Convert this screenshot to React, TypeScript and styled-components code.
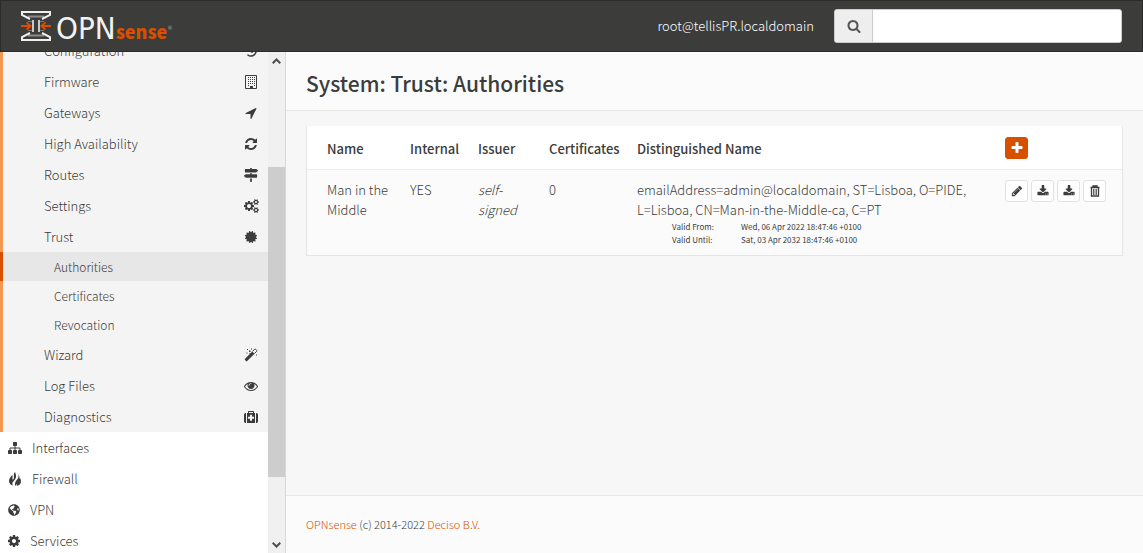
import React from "react";
import styled, { createGlobalStyle, css } from "styled-components";
import { FaCertificate, FaMapSigns, FaGlobeAmericas, FaHistory } from "react-icons/fa";

const orange = "#d94f00";
const ink = "#3c3c3b";

const GlobalStyle = createGlobalStyle`
  *, *::before, *::after { box-sizing: border-box; }
  body {
    margin: 0;
    background: #f7f7f7;
    color: ${ink};
    font-family: "Noto Sans CJK SC", "Noto Sans", sans-serif;
    font-size: 13px;
    font-weight: 300;
    line-height: 20px;
  }
  a { color: ${orange}; text-decoration: none; }
`;

const paths = {
  search:
    "M1216 832q0-185-131.5-316.5t-316.5-131.5-316.5 131.5-131.5 316.5 131.5 316.5 316.5 131.5 316.5-131.5 131.5-316.5zm512 832q0 52-38 90t-90 38q-54 0-90-38l-343-342q-179 124-399 124-143 0-273.5-55.5t-225-150-150-225-55.5-273.5 55.5-273.5 150-225 225-150 273.5-55.5 273.5 55.5 225 150 150 225 55.5 273.5q0 220-124 399l343 343q37 37 37 90z",
  plus:
    "M1600 736v192q0 40-28 68t-68 28h-416v416q0 40-28 68t-68 28h-192q-40 0-68-28t-28-68v-416h-416q-40 0-68-28t-28-68v-192q0-40 28-68t68-28h416v-416q0-40 28-68t68-28h192q40 0 68 28t28 68v416h416q40 0 68 28t28 68z",
  cog:
    "M1152 896q0-106-75-181t-181-75-181 75-75 181 75 181 181 75 181-75 75-181zm512-109v222q0 12-8 23t-20 13l-185 28q-19 54-39 91 35 50 107 138 10 12 10 25t-9 23q-27 37-99 108t-94 71q-12 0-26-9l-138-108q-44 23-91 38-16 136-29 186-7 28-36 28h-222q-14 0-24.5-8.5t-11.5-21.5l-28-184q-49-16-90-37l-141 107q-10 9-25 9-14 0-25-11-126-114-165-168-7-10-7-23 0-12 8-23 15-21 51-66.5t54-70.5q-27-50-41-99l-183-27q-13-2-21-12.5t-8-23.5v-222q0-12 8-23t19-13l186-28q14-46 39-92-40-57-107-138-10-12-10-24 0-10 9-23 26-36 98.5-107.5t94.5-71.5q13 0 26 10l138 107q44-23 91-38 16-136 29-186 7-28 36-28h222q14 0 24.5 8.5t11.5 21.5l28 184q49 16 90 37l142-107q9-9 24-9 13 0 25 10 129 119 165 170 7 8 7 22 0 12-8 23-15 21-51 66.5t-54 70.5q26 50 41 98l183 28q13 2 21 12.5t8 23.5z",
  cogs:
    "M896 896q0-106-75-181t-181-75-181 75-75 181 75 181 181 75 181-75 75-181zm768 512q0-52-38-90t-90-38-90 38-38 90q0 53 37.5 90.5t90.5 37.5 90.5-37.5 37.5-90.5zm0-1024q0-52-38-90t-90-38-90 38-38 90q0 53 37.5 90.5t90.5 37.5 90.5-37.5 37.5-90.5zm-384 421v185q0 10-7 19.5t-16 10.5l-155 24q-11 35-32 76 34 48 90 115 7 11 7 20 0 12-7 19-23 30-82.5 89.5t-78.5 59.5q-11 0-21-7l-115-90q-37 19-77 31-11 108-23 155-7 24-30 24h-186q-11 0-20-7.5t-10-17.5l-23-153q-34-10-75-31l-118 89q-7 7-20 7-11 0-21-8-144-133-144-160 0-9 7-19 10-14 41-53t47-61q-23-44-35-82l-152-24q-10-1-17-9.5t-7-19.5v-185q0-10 7-19.5t16-10.5l155-24q11-35 32-76-34-48-90-115-7-11-7-20 0-12 7-20 22-30 82-89t79-59q11 0 21 7l115 90q34-18 77-32 11-108 23-154 7-24 30-24h186q11 0 20 7.5t10 17.5l23 153q34 10 75 31l118-89q8-7 20-7 11 0 21 8 144 133 144 160 0 8-7 19-12 16-42 54t-45 60q23 48 34 82l152 23q10 2 17 10.5t7 19.5zm640 533v140q0 16-149 31-12 27-30 52 51 113 51 138 0 4-4 7-122 71-124 71-8 0-46-47t-52-68q-20 2-30 2t-30-2q-14 21-52 68t-46 47q-2 0-124-71-4-3-4-7 0-25 51-138-18-25-30-52-149-15-149-31v-140q0-16 149-31 13-29 30-52-51-113-51-138 0-4 4-7 4-2 35-20t59-34 30-16q8 0 46 46.5t52 67.5q20-2 30-2t30 2q51-71 92-112l6-2q4 0 124 70 4 3 4 7 0 25-51 138 17 23 30 52 149 15 149 31zm0-1024v140q0 16-149 31-12 27-30 52 51 113 51 138 0 4-4 7-122 71-124 71-8 0-46-47t-52-68q-20 2-30 2t-30-2q-14 21-52 68t-46 47q-2 0-124-71-4-3-4-7 0-25 51-138-18-25-30-52-149-15-149-31v-140q0-16 149-31 13-29 30-52-51-113-51-138 0-4 4-7 4-2 35-20t59-34 30-16q8 0 46 46.5t52 67.5q20-2 30-2t30 2q51-71 92-112l6-2q4 0 124 70 4 3 4 7 0 25-51 138 17 23 30 52 149 15 149 31z",
  refresh:
    "M1639 1056q0 5-1 7-64 268-268 434.5t-478 166.5q-146 0-282.5-55t-243.5-157l-129 129q-19 19-45 19t-45-19-19-45v-448q0-26 19-45t45-19h448q26 0 45 19t19 45-19 45l-137 137q71 66 161 102t187 36q134 0 250-65t186-179q11-17 53-117 8-23 30-23h192q13 0 22.5 9.5t9.5 22.5zm25-800v448q0 26-19 45t-45 19h-448q-26 0-45-19t-19-45 19-45l138-138q-148-137-349-137-134 0-250 65t-186 179q-11 17-53 117-8 23-30 23h-199q-13 0-22.5-9.5t-9.5-22.5v-7q65-268 270-434.5t480-166.5q146 0 284 55.5t245 156.5l130-129q19-19 45-19t45 19 19 45z",
  eye:
    "M1664 960q-152-236-381-353 61 104 61 225 0 185-131.5 316.5t-316.5 131.5-316.5-131.5-131.5-316.5q0-121 61-225-229 117-381 353 133 205 333.5 326.5t434.5 121.5 434.5-121.5 333.5-326.5zm-720-384q0-20-14-34t-34-14q-125 0-214.5 89.5t-89.5 214.5q0 20 14 34t34 14 34-14 14-34q0-86 61-147t147-61q20 0 34-14t14-34zm848 384q0 34-20 69-140 230-376.5 368.5t-499.5 138.5-499.5-139-376.5-368q-20-35-20-69t20-69q140-229 376.5-368t499.5-139 499.5 139 376.5 368q20 35 20 69z",
  download:
    "M1344 1344q0-26-19-45t-45-19-45 19-19 45 19 45 45 19 45-19 19-45zm256 0q0-26-19-45t-45-19-45 19-19 45 19 45 45 19 45-19 19-45zm128-224v320q0 40-28 68t-68 28h-1472q-40 0-68-28t-28-68v-320q0-40 28-68t68-28h465l135 136q58 56 136 56t136-56l136-136h464q40 0 68 28t28 68zm-325-569q17 41-14 70l-448 448q-18 19-45 19t-45-19l-448-448q-31-29-14-70 17-39 59-39h256v-448q0-26 19-45t45-19h256q26 0 45 19t19 45v448h256q42 0 59 39z",
  pencil:
    "M491 1536l91-91-235-235-91 91v107h128v128h107zm523-928q0-22-22-22-10 0-17 7l-542 542q-7 7-7 17 0 22 22 22 10 0 17-7l542-542q7-7 7-17zm-54-192l416 416-832 832h-416v-416zm683 96q0 53-37 90l-166 166-416-416 166-165q36-38 90-38 53 0 91 38l235 234q37 39 37 91z",
  arrow:
    "M1593 349l-640 1280q-17 35-57 35-5 0-15-2-22-5-35.5-22.5t-13.5-39.5v-576h-576q-22 0-39.5-13.5t-22.5-35.5 4-42 29-30l1280-640q13-7 29-7 27 0 45 19 15 14 18.5 34.5t-6.5 39.5z",
  sitemap:
    "M1792 1248v320q0 40-28 68t-68 28h-320q-40 0-68-28t-28-68v-320q0-40 28-68t68-28h96v-192h-512v192h96q40 0 68 28t28 68v320q0 40-28 68t-68 28h-320q-40 0-68-28t-28-68v-320q0-40 28-68t68-28h96v-192h-512v192h96q40 0 68 28t28 68v320q0 40-28 68t-68 28h-320q-40 0-68-28t-28-68v-320q0-40 28-68t68-28h96v-192q0-52 38-90t90-38h512v-192h-96q-40 0-68-28t-28-68v-320q0-40 28-68t68-28h320q40 0 68 28t28 68v320q0 40-28 68t-68 28h-96v192h512q52 0 90 38t38 90v192h96q40 0 68 28t28 68z",
  medkit:
    "M1280 1088v-192q0-14-9-23t-23-9h-224v-224q0-14-9-23t-23-9h-192q-14 0-23 9t-9 23v224h-224q-14 0-23 9t-9 23v192q0 14 9 23t23 9h224v224q0 14 9 23t23 9h192q14 0 23-9t9-23v-224h224q14 0 23-9t9-23zm-640-704h512v-128h-512v128zm-384 0v1280h-32q-92 0-158-66t-66-158v-832q0-92 66-158t158-66h32zm1152 0v1280h-1024v-1280h128v-160q0-40 28-68t68-28h576q40 0 68 28t28 68v160h128zm384 224v832q0 92-66 158t-158 66h-32v-1280h32q92 0 158 66t66 158z",
};

type IconProps = { name: keyof typeof paths; size?: number; width?: number; box?: string };

const Icon = ({ name, size = 14, width = size, box = "0 0 1792 1792" }: IconProps) => (
  <svg width={width} height={size} viewBox={box} fill="currentColor" aria-hidden="true">
    <path d={paths[name]} />
  </svg>
);

const BuildingIcon = () => (
  <svg width="14" height="14" viewBox="0 0 14 14" aria-hidden="true">
    <path d="M1.500 .5h11v13h-11z" fill="none" stroke="currentColor" />
    <path
      d="M4 2.500h7M4 4.500h7M4 6.500h7M4 8.500h7M4 10.500h1M10 10.500h1"
      fill="none"
      stroke="currentColor"
      strokeDasharray="1 1"
    />
    <path d="M6 11h3v2h-3z" fill="currentColor" />
  </svg>
);

const WandIcon = () => (
  <svg width="14" height="14" viewBox="0 0 14 14" aria-hidden="true">
    <path d="M1 10.800L8.300 3.500L10.500 5.700L3.200 13Q2.600 13.500 2 13L1 12Q.5 11.400 1 10.800Z" fill="currentColor" />
    <path d="M8.300 3.500L10.600 1.200Q11.100 .8 11.600 1.200L12.700 2.300Q13.100 2.800 12.700 3.300L10.400 5.600" fill="none" stroke="currentColor" />
    <path d="M3 1h1v1h-1zM5 2.500h1.500v1.500h-1.500zM7 .5h1v1h-1zM2.500 4.500h1v1h-1zM12 6.500h1v1h-1zM5.500 5h1v1h-1z" fill="currentColor" />
  </svg>
);

const TrashIcon = () => (
  <svg width="12" height="12" viewBox="0 0 12 12" aria-hidden="true">
    <path d="M4 2V1h4v1M1.500 2.500h9M2.500 3v8h7V3" fill="none" stroke="currentColor" strokeWidth="1.300" />
    <path d="M4.500 4v6M6 4v6M7.500 4v6" fill="none" stroke="currentColor" strokeWidth=".8" />
  </svg>
);

const FireIcon = () => (
  <svg width="14" height="14" viewBox="0 0 14 14" fill="currentColor" aria-hidden="true">
    <path d="M7 0C5 2 6.300 4 5.800 6.500C5.600 7.600 4.700 8 4.500 7C4.300 6 4.800 4.500 4.500 3C2.500 4.500 1 6.500 1 9C1 11.500 2.800 13 5 13.500C4 12 4.200 10.500 5.500 9.200C7.500 7.200 8.500 5.500 8 3C7.800 1.800 7.200 1 7 0Z" />
    <path d="M10.500 2C11 4.500 10.300 6.500 8.700 8C7.300 9.500 6.500 11.500 7.300 14C8 13.500 8.400 12.800 8.500 12C9 12.400 9 13 8.800 14C11.500 13.500 13.200 11.500 13 9C12.900 7.500 12.300 6.500 11.800 5.500C11.800 6.300 11.600 6.800 11.200 7.200C11.600 5.300 11.500 3.500 10.500 2Z" />
  </svg>
);

const LogoMark = () => (
  <svg width="30" height="30" viewBox="0 0 30 30" fill="none" aria-hidden="true">
    <path d="M7 5.500h16M7 24.500h16" stroke="#8c8c8b" strokeWidth="2" />
    <path d="M7 10.500h4M19 10.500h4M7 19.500h4M19 19.500h4" stroke="#777776" />
    <path d="M12 9v12M18 9v12" stroke="#c8c8c8" strokeWidth="2" />
    <path d="M9 8L1 4V1h28v3L21 8M9 22L1 26v3h28v-3L21 22" stroke="#efefef" strokeWidth="2" />
    <path d="M0 15h9M5.500 11.500l4 3.500l-4 3.500M30 15h-9M24.500 11.500l-4 3.500l4 3.500" stroke={orange} strokeWidth="2" />
  </svg>
);

const Page = styled.div`
  display: grid;
  grid-template-rows: 52px minmax(0, 1fr);
  height: 100vh;
`;

const TopBar = styled.header`
  display: flex;
  align-items: center;
  justify-content: space-between;
  padding: 0 20px;
  background: ${ink};
  border: 1px solid #2b2b2a;
`;

const Brand = styled.a`
  display: flex;
  align-items: center;
  gap: 5px;
  color: #f2f2f2;
`;

const Wordmark = styled.span`
  display: flex;
  align-items: baseline;
  padding-top: 4px;
  font-family: "DejaVu Sans Condensed", "DejaVu Sans", sans-serif;
  font-size: 31px;
  font-weight: 400;
  line-height: 30px;
`;

const WordmarkTail = styled.span`
  color: ${orange};
  font-family: "Noto Sans CJK SC", sans-serif;
  font-size: 18px;
  font-weight: 900;
  line-height: 20px;
`;

const Registered = styled.span`
  align-self: center;
  color: #a0a0a0;
  font-size: 6px;
  line-height: 10px;
`;

const TopTools = styled.div`
  display: flex;
  align-items: center;
  gap: 20px;
`;

const User = styled.span`
  color: #fff;
`;

const SearchBox = styled.div`
  display: flex;
  width: 288px;
  height: 34px;
  overflow: hidden;
  border: 1px solid #ccc;
  border-radius: 3px;
  background: #fff;
`;

const SearchIcon = styled.label`
  display: flex;
  align-items: center;
  justify-content: center;
  width: 38px;
  background: #eee;
  border-right: 1px solid #ccc;
  color: #555;
`;

const SearchInput = styled.input`
  flex: 1;
  min-width: 0;
  padding: 0 12px;
  border: 0;
  outline: 0;
  font: inherit;
`;

const Body = styled.div`
  display: grid;
  grid-template-columns: 286px minmax(0, 1fr);
  min-height: 0;
`;

const Sidebar = styled.aside`
  display: grid;
  grid-template-columns: minmax(0, 1fr) 17px;
  min-height: 0;
  border-right: 1px solid #d8d8d8;
  background: #fff;
`;

const NavViewport = styled.div`
  min-height: 0;
  overflow: hidden;
`;

const Nav = styled.nav`
  margin-top: -17px;
`;

const SystemGroup = styled.div`
  background: #f4f4f4;
  border-left: 3px solid #f29850;
`;

const linkText = css`
  color: ${ink};
  display: flex;
  align-items: center;
`;

const NavLink = styled.a`
  ${linkText}
  justify-content: space-between;
  height: 31px;
  padding: 0 8px 0 41px;
`;

const NavIcon = styled.span`
  display: flex;
  align-items: center;
  justify-content: center;
  width: 18px;
`;

const SubLink = styled.a<{ $active?: boolean }>`
  ${linkText}
  height: 29px;
  margin-left: -3px;
  padding-left: 51px;
  border-left: 3px solid ${(p) => (p.$active ? orange : "transparent")};
  background: ${(p) => (p.$active ? "#e7e7e7" : "transparent")};
  font-size: 12px;
`;

const RootLink = styled.a`
  ${linkText}
  gap: 10px;
  height: 31px;
  padding-left: 8px;
`;

const ScrollTrack = styled.div`
  display: grid;
  grid-template-rows: 17px 98fr 310fr 59fr 17px;
  background: #f0f0f0;
  color: #505050;
`;

const ScrollArrow = styled.span`
  display: flex;
  align-items: center;
  justify-content: center;
`;

const ScrollThumb = styled.span`
  grid-row: 3;
  background: #cdcdcd;
`;

const ScrollEnd = styled(ScrollArrow)`
  grid-row: 5;
`;

const Main = styled.main`
  display: flex;
  flex-direction: column;
  min-height: 0;
`;

const PageHead = styled.div`
  padding: 18px 20px 14px;
  background: #fbfbfb;
  border-bottom: 1px solid #e8e8e8;
`;

const Title = styled.h1`
  margin: 0;
  font-size: 21px;
  font-weight: 500;
  line-height: 26px;
`;

const Content = styled.section`
  flex: 1;
  padding: 15px 20px;
`;

const Table = styled.table`
  width: 100%;
  table-layout: fixed;
  border-collapse: separate;
  border-spacing: 0;
  background: #fbfbfb;
  border: 1px solid #e5e5e5;
  border-top: 0;
`;

const Col = styled.col<{ $width?: number }>`
  width: ${(p) => (p.$width ? `${p.$width}px` : "auto")};
`;

const cell = css`
  text-align: left;
  &:first-child { padding-left: 20px; }
`;

const HeadCell = styled.th<{ $tools?: boolean }>`
  padding: ${(p) => (p.$tools ? "10px" : "12px 10px 10px")};
  ${cell}
  height: 44px;
  vertical-align: middle;
  background: #fff;
  border-bottom: 1px solid #ececec;
  font-weight: 500;
`;

const Cell = styled.td`
  padding: 10px 10px 9px;
  vertical-align: top;
  ${cell}
`;

const Validity = styled.dl`
  display: grid;
  grid-template-columns: 69px 1fr;
  margin: 0 0 0 35px;
  font-size: 8px;
  line-height: 13px;
  font-weight: 400;
`;

const Detail = styled.dd`
  margin: 0;
`;

const Actions = styled.div`
  display: flex;
  gap: 3px;
`;

const IconButton = styled.button<{ $primary?: boolean }>`
  display: flex;
  align-items: center;
  justify-content: center;
  width: 23px;
  height: 22px;
  padding: 0;
  border: 1px solid ${(p) => (p.$primary ? orange : "#e2e2e2")};
  border-radius: 3px;
  background: ${(p) => (p.$primary ? orange : "#fff")};
  color: ${(p) => (p.$primary ? "#fff" : ink)};
`;

const Footer = styled.footer`
  padding: 18px 20px 19px;
  background: #fbfbfb;
  border-top: 1px solid #e8e8e8;
  font-size: 11px;
`;

const upper = [
  { label: "Configuration", icon: <FaHistory size={12} /> },
  { label: "Firmware", icon: <BuildingIcon /> },
  { label: "Gateways", icon: <Icon name="arrow" /> },
  { label: "High Availability", icon: <Icon name="refresh" /> },
  { label: "Routes", icon: <FaMapSigns size={14} /> },
  { label: "Settings", icon: <Icon name="cogs" width={15} box="0 0 1920 1792" /> },
  { label: "Trust", icon: <FaCertificate size={12} /> },
];
const trust = ["Authorities", "Certificates", "Revocation"];
const lower = [
  { label: "Wizard", icon: <WandIcon /> },
  { label: "Log Files", icon: <Icon name="eye" /> },
  { label: "Diagnostics", icon: <Icon name="medkit" /> },
];
const roots = [
  { label: "Interfaces", icon: <Icon name="sitemap" /> },
  { label: "Firewall", icon: <FireIcon /> },
  { label: "VPN", icon: <FaGlobeAmericas size={12} /> },
  { label: "Services", icon: <Icon name="cog" width={12} box="128 0 1536 1792" /> },
];

const NavItem = ({ label, icon }: { label: string; icon: React.ReactNode }) => (
  <NavLink href="#">
    {label}
    <NavIcon>{icon}</NavIcon>
  </NavLink>
);

const Chevron = ({ up }: { up?: boolean }) => (
  <svg width="9" height="6" viewBox="0 0 9 6" fill="none" stroke="currentColor" strokeWidth="2" aria-hidden="true">
    <path d={up ? "M.7 5.300L4.500 1.500L8.300 5.300" : "M.7 .7L4.500 4.500L8.300 .7"} />
  </svg>
);

export default function App() {
  return (
    <Page>
      <GlobalStyle />
      <TopBar>
        <Brand href="#" aria-label="OPNsense">
          <LogoMark />
          <Wordmark>
            OPN<WordmarkTail>sense</WordmarkTail>
            <Registered>®</Registered>
          </Wordmark>
        </Brand>
        <TopTools>
          <User>root@tellisPR.localdomain</User>
          <SearchBox>
            <SearchIcon htmlFor="menu-search" aria-label="Search"><Icon name="search" /></SearchIcon>
            <SearchInput id="menu-search" type="text" />
          </SearchBox>
        </TopTools>
      </TopBar>
      <Body>
        <Sidebar>
          <NavViewport>
            <Nav>
              <SystemGroup>
                {upper.map((item) => <NavItem key={item.label} {...item} />)}
                {trust.map((label, n) => (
                  <SubLink href="#" key={label} $active={n === 0}>{label}</SubLink>
                ))}
                {lower.map((item) => <NavItem key={item.label} {...item} />)}
              </SystemGroup>
              {roots.map((item) => (
                <RootLink href="#" key={item.label}>{item.icon}{item.label}</RootLink>
              ))}
            </Nav>
          </NavViewport>
          <ScrollTrack aria-hidden="true">
            <ScrollArrow><Chevron up /></ScrollArrow>
            <ScrollThumb />
            <ScrollEnd><Chevron /></ScrollEnd>
          </ScrollTrack>
        </Sidebar>
        <Main>
          <PageHead>
            <Title>System: Trust: Authorities</Title>
          </PageHead>
          <Content>
            <Table>
              <colgroup>
                <Col $width={93} />
                <Col $width={68} />
                <Col $width={71} />
                <Col $width={88} />
                <Col />
                <Col $width={127} />
              </colgroup>
              <thead>
                <tr>
                  <HeadCell>Name</HeadCell>
                  <HeadCell>Internal</HeadCell>
                  <HeadCell>Issuer</HeadCell>
                  <HeadCell>Certificates</HeadCell>
                  <HeadCell>Distinguished Name</HeadCell>
                  <HeadCell $tools>
                    <IconButton $primary type="button" aria-label="Add"><Icon name="plus" /></IconButton>
                  </HeadCell>
                </tr>
              </thead>
              <tbody>
                <tr>
                  <Cell>Man in the Middle</Cell>
                  <Cell>YES</Cell>
                  <Cell><em>self-signed</em></Cell>
                  <Cell>0</Cell>
                  <Cell>
                    emailAddress=admin@localdomain, ST=Lisboa, O=PIDE, L=Lisboa, CN=Man-in-the-Middle-ca, C=PT
                    <Validity>
                      <dt>Valid From:</dt>
                      <Detail>Wed, 06 Apr 2022 18:47:46 +0100</Detail>
                      <dt>Valid Until:</dt>
                      <Detail>Sat, 03 Apr 2032 18:47:46 +0100</Detail>
                    </Validity>
                  </Cell>
                  <Cell>
                    <Actions>
                      <IconButton type="button" aria-label="Edit"><Icon name="pencil" size={12} /></IconButton>
                      <IconButton type="button" aria-label="Export CA certificate"><Icon name="download" size={12} /></IconButton>
                      <IconButton type="button" aria-label="Export private key"><Icon name="download" size={12} /></IconButton>
                      <IconButton type="button" aria-label="Delete"><TrashIcon /></IconButton>
                    </Actions>
                  </Cell>
                </tr>
              </tbody>
            </Table>
          </Content>
          <Footer>
            <a href="#">OPNsense</a> (c) 2014-2022 <a href="#">Deciso B.V.</a>
          </Footer>
        </Main>
      </Body>
    </Page>
  );
}
